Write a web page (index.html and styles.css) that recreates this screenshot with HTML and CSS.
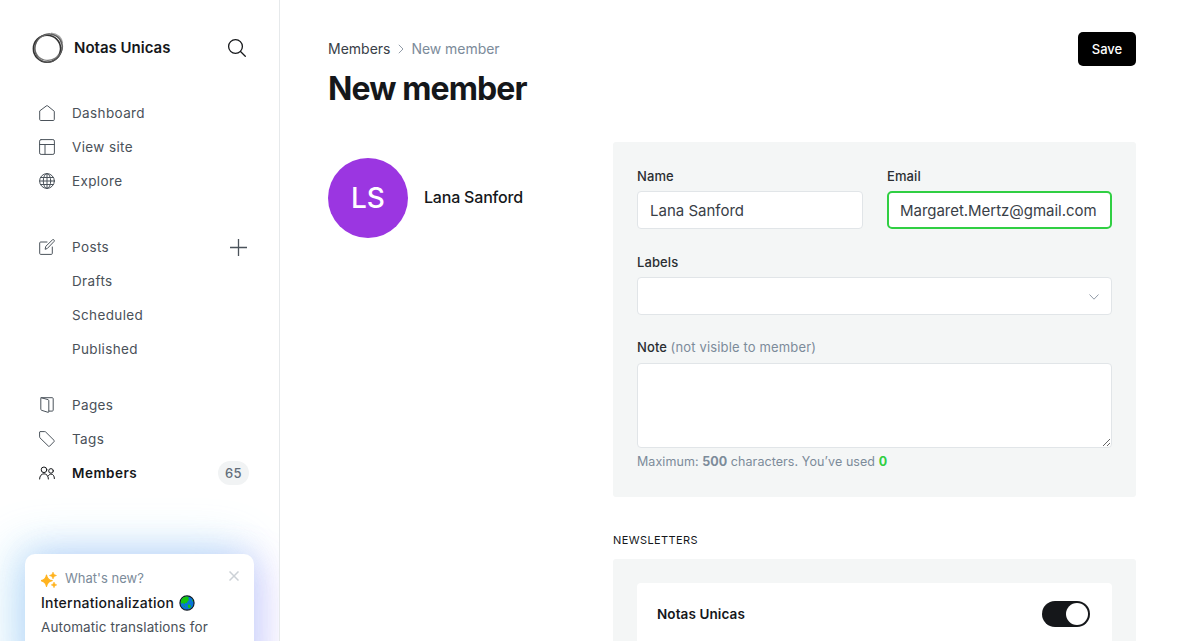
FILE: index.html
```html
<!DOCTYPE html>
<html lang="en">
<head>
<meta charset="utf-8">
<title>New member - Notas Unicas</title>
<link rel="stylesheet" href="styles.css">
</head>
<body>
<div class="app">
  <aside class="sidebar">
    <header class="brand">
      <svg class="brand-logo" viewBox="0 0 32 32" fill="none">
        <path d="M19 1.800C25 2.500 29 6 30 11M29.600 15C29.300 21.500 25.500 26 20.500 28.600" stroke="#aaa" stroke-width="2.400"/>
        <ellipse cx="15" cy="16.700" rx="13.600" ry="13.500" stroke="#333" stroke-width="1.600"/>
        <ellipse cx="16.800" cy="15.300" rx="14" ry="12.800" transform="rotate(-28 16.8 15.3)" stroke="#777" stroke-width="1.1"/>
        <ellipse cx="16.400" cy="16" rx="13.500" ry="14.300" transform="rotate(28 16.4 16)" stroke="#555" stroke-width="1"/>
      </svg>
      <span class="brand-name">Notas Unicas</span>
      <svg class="search" viewBox="0 0 20 20" fill="none" stroke="#15171a" stroke-width="1.3" stroke-linecap="round"><circle cx="8.500" cy="8.500" r="6.900"/><path d="M13.500 13.500l4.800 4.800"/></svg>
    </header>
    <nav class="nav">
      <ul class="nav-group">
        <li><svg viewBox="0 0 16 16"><path d="M.7 6.300v8.200c0 .6.400 1 1 1h12.600c.6 0 1-.4 1-1V6.300L8.700.9a1 1 0 0 0-1.400 0z"/></svg><span>Dashboard</span></li>
        <li><svg viewBox="0 0 16 16"><rect x=".6" y=".6" width="14.800" height="14.800" rx="1.500"/><path d="M.6 5.500h14.800M6 5.500v9.900"/></svg><span>View site</span></li>
        <li><svg viewBox="0 0 16 16"><circle cx="8" cy="8" r="7.400"/><ellipse cx="8" cy="8" rx="3.700" ry="7.400"/><path d="M8 .6v14.800M.6 8h14.800M1.600 4.500h12.800M1.600 11.500h12.800"/></svg><span>Explore</span></li>
      </ul>
      <ul class="nav-group posts">
        <li><svg viewBox="0 0 16 16"><path d="M8 3H1.700a1 1 0 0 0-1 1v10.400a1 1 0 0 0 1 1h10.600a1 1 0 0 0 1-1V8M6.200 9.900l.6-2.600L13.500.8c.5-.4 1.100-.3 1.500.1s.5 1 .1 1.500L8.600 9.200z"/></svg><span>Posts</span><svg class="plus" viewBox="0 0 17 17"><path d="M8.500 0v17M0 8.500h17"/></svg></li>
        <li class="sub">Drafts</li>
        <li class="sub">Scheduled</li>
        <li class="sub">Published</li>
      </ul>
      <ul class="nav-group">
        <li><svg viewBox="0 0 16 16"><path d="M2.100.7 9 2.600c.5.200.8.500.8 1v11.100c0 .5-.4.800-.8.600L2.600 13.300c-.5-.2-.8-.5-.8-1V1.200c0-.3.200-.5.500-.5h11c.5 0 .9.400.9.900v11.600c0 .5-.4.900-.9.900H9.800"/></svg><span>Pages</span></li>
        <li><svg viewBox="0 0 16 16"><path d="M.6 1.400v4.500c0 .4.100.7.400 1l8.500 8.300c.3.300.8.300 1.100 0l4.500-4.700c.3-.3.300-.8 0-1.100L6.700 1C6.400.7 6.100.6 5.800.6H1.300z"/></svg><span>Tags</span></li>
        <li class="active"><svg viewBox="0 0 16 16"><circle cx="5" cy="4.800" r="2.800"/><circle cx="12" cy="5.900" r="2.300"/><path d="M.6 14c0-3.100 1.900-5.200 4.400-5.200S9.400 10.900 9.400 14M9.500 10.600c.6-1 1.500-1.500 2.500-1.500 2 0 3.400 1.700 3.400 4.500"/></svg><span>Members</span><b class="count">65</b></li>
      </ul>
    </nav>
    <section class="whats-new">
      <div class="wn-head">
        <svg class="sparkle" viewBox="0 0 16 16" fill="#ffb31f"><path d="M5.500 3Q6.300 8 11.200 8.700 6.300 9.500 5.500 14.500 4.700 9.500-.2 8.700 4.700 8 5.500 3z" stroke="#ffb31f" stroke-width="1.200" stroke-linejoin="round"/><path d="M12 0l1.100 2.400 2.500 1.100-2.500 1.100L12 7l-1.100-2.400-2.500-1.100 2.500-1.100zM13 10l.9 2 1.900.9-1.900.9-.9 2-.9-2-1.900-.9 1.900-.9z" stroke="#ffb31f" stroke-width=".5"/></svg>
        <span>What's new?</span>
        <svg class="close" viewBox="0 0 10 10"><path d="M.5.500l9 9M9.500.500l-9 9"/></svg>
      </div>
      <h2><span>Internationalization</span>
        <svg class="globe" viewBox="0 0 16 16"><circle cx="8" cy="8" r="7.100" fill="#0875d8" stroke="#101820" stroke-width="1.100"/><path d="M2 5.500C3 3 5 1.700 8 1.600l2 .8-.8 1.400L10 5 8.500 6.500 7.700 8.300 6.500 7.500 5.400 9.200 4 8 2 8.700zM8.800 9.500l2.500.4.7 1.500-1.500 2-1.500-1zM4.500 10.300l1.800 1.300-.7.600zM13 4l1.200 2-1 .5z" fill="#16c60c"/></svg>
      </h2>
      <p>Automatic translations for Ghost members and visitors</p>
    </section>
  </aside>
  <main class="main">
    <header class="page-head">
      <div>
        <div class="crumbs"><span>Members</span><svg viewBox="0 0 6 10"><path d="M.8.800 5 5 .8 9.200"/></svg><span class="current">New member</span></div>
        <h1>New member</h1>
      </div>
      <button class="save">Save</button>
    </header>
    <div class="columns">
      <div class="profile"><div class="avatar">LS</div><h3>Lana Sanford</h3></div>
      <div class="forms">
        <form class="panel">
          <div class="row">
            <div class="field"><label>Name</label><div class="input">Lana Sanford</div></div>
            <div class="field"><label>Email</label><div class="input focused">Margaret.Mertz@gmail.com</div></div>
          </div>
          <div class="field labels"><label>Labels</label><div class="input select"><svg viewBox="0 0 10 6"><path d="M.5.500 5 5.200 9.500.5"/></svg></div></div>
          <div class="field note-field"><label>Note <span>(not visible to member)</span></label><textarea class="note"></textarea>
            <p class="hint">Maximum: <b>500</b> characters. You’ve used <b class="used">0</b></p></div>
        </form>
        <h4>Newsletters</h4>
        <div class="panel newsletters"><div class="newsletter"><span>Notas Unicas</span><span class="toggle"><i></i></span></div></div>
      </div>
    </div>
  </main>
</div>
</body>
</html>
```
FILE: styles.css
```css
* { box-sizing: border-box; }
body { margin: 0; font-family: Inter, "Liberation Sans", sans-serif; color: #15171a; background: #fff; }
ul, h1, h2, h3, h4, p { margin: 0; padding: 0; list-style: none; }
svg { display: block; flex: none; }
.app { display: flex; height: 641px; overflow: hidden; }

.sidebar { width: 280px; flex: none; border-right: 1px solid #e6e9eb; display: flex; flex-direction: column; overflow: hidden; }
.brand { display: flex; flex: none; align-items: center; height: 96px; padding: 0 32px; }
.brand-logo { width: 32px; height: 32px; }
.brand-name { font-size: 15px; font-weight: 600; margin-left: 10px; padding-bottom: 2px; flex: 1; }
.search { width: 20px; height: 20px; }
.nav { flex: none; height: 458px; }
.nav-group { margin-bottom: 32px; }
.nav-group.posts { margin-bottom: 22px; }
.nav-group li { display: flex; align-items: center; height: 34px; padding: 0 30px 0 39px; font-size: 13.5px; letter-spacing: .37px; color: #4a5159; font-weight: 400; }
.nav-group li svg { width: 16px; height: 16px; fill: none; stroke: #4b535b; stroke-width: 1; stroke-linejoin: round; stroke-linecap: round; }
.nav-group li span { margin-left: 17px; flex: 1; }
.nav-group li.sub { padding-left: 72px; }
.nav-group li .plus { width: 17px; height: 17px; margin-right: 2px; stroke-width: 1.300; }
.nav-group li.active { color: #15171a; font-weight: 600; letter-spacing: .5px; }
.nav-group li.active svg { stroke: #15171a; }
.count { width: 31px; height: 24px; border-radius: 12px; background: #f1f3f4; color: #626d79; font-size: 13px; font-weight: 500; line-height: 24px; text-align: center; }

.whats-new { flex: none; height: 130px; margin: 0 25px; padding: 16px; border-radius: 10px; background: #fff; box-shadow: -12px -4px 50px rgba(100, 200, 240, .32), 12px 8px 40px rgba(180, 100, 255, .2), 0 -2px 32px rgba(110, 165, 240, .24); }
.wn-head { display: flex; align-items: center; height: 17px; font-size: 13px; color: #7c8b9a; }
.sparkle { width: 16px; height: 16px; margin-top: 2px; }
.wn-head span { flex: 1; margin: -1px 0 0 8px; white-space: nowrap; }
.close { width: 10px; height: 10px; margin: -5px -1px 0 0; stroke: #ccd1d6; stroke-width: 1.500; }
.whats-new h2 { display: flex; align-items: center; gap: 5px; height: 20px; margin-top: 6px; font-size: 14px; font-weight: 500; letter-spacing: .25px; white-space: nowrap; }
.whats-new h2 span { padding-bottom: 2px; }
.globe { width: 16px; height: 16px; }
.whats-new p { margin-top: 5px; font-size: 13.5px; letter-spacing: .12px; line-height: 19.5px; color: #4a5159; }

.main { flex: 1; padding: 32px 48px; overflow: hidden; }
.page-head { display: flex; justify-content: space-between; align-items: flex-start; height: 110px; }
.crumbs { display: flex; align-items: center; height: 34px; font-size: 14px; line-height: 16px; padding-bottom: 1px; color: #394047; }
.crumbs svg { width: 6px; height: 10px; margin: 1px 7px 0 8px; fill: none; stroke: #929ca8; }
.crumbs .current { color: #7c8b9a; letter-spacing: -.05px; }
h1 { font-size: 32px; line-height: 40px; margin-top: 3px; font-weight: 700; letter-spacing: -.9px; }
.save { width: 58px; height: 34px; border: 0; border-radius: 5px; background: #000; color: #fff; font: 500 13px Inter, sans-serif; padding: 0; }
.columns { display: flex; justify-content: space-between; }
.profile { display: flex; align-items: center; height: 112px; gap: 16px; }
.avatar { width: 80px; height: 80px; border-radius: 50%; background: #9b36e1; color: #fff; font-size: 28px; font-weight: 500; line-height: 80px; text-align: center; }
h3 { font-size: 16px; font-weight: 500; letter-spacing: -.2px; padding-bottom: 2px; }
.forms { width: 523px; }
.panel { background: #f4f6f6; border-radius: 3px; padding: 24px; height: 355px; }
.row { display: grid; grid-template-columns: 226px 225px; gap: 24px; }
.field label { display: block; height: 25px; line-height: 21px; font-size: 13px; font-weight: 500; letter-spacing: .1px; color: #2a2e32; }
.field label span { color: #7c8b9a; font-weight: 400; letter-spacing: .15px; }
.input { height: 38px; padding: 0 12px; line-height: 37px; border: 1px solid #e1e5e8; border-radius: 4px; background: #fff; color: #394047; font-size: 15px; }
.input.focused { padding: 0 11px; line-height: 35px; border: 2px solid #30cf43; border-radius: 5px; letter-spacing: -.03px; }
.labels { margin: 23px 0; }
.note-field label { line-height: 19px; }
.select { display: flex; align-items: center; justify-content: flex-end; }
.select svg { width: 10px; height: 6px; margin-top: 1px; fill: none; stroke: #929ca8; }
.note { display: block; width: 475px; height: 85px; border: 1px solid #e1e5e8; border-radius: 4px; background: #fff; }
.hint { margin-top: 4px; font-size: 12.5px; letter-spacing: .07px; line-height: 20px; color: #7c8b9a; }
.hint b { font-weight: 700; }
.hint .used { color: #30cf43; }
h4 { margin-top: 34px; height: 28px; font-size: 11px; line-height: 18px; font-weight: 400; letter-spacing: .4px; text-transform: uppercase; }
.newsletter { display: flex; align-items: center; justify-content: space-between; height: 62px; padding: 0 22px 0 20px; border-radius: 4px; background: #fff; font-size: 13.5px; font-weight: 600; letter-spacing: .1px; }
.toggle { width: 48px; height: 26px; border-radius: 13px; background: #15171a; padding: 2px; display: flex; justify-content: flex-end; }
.toggle i { width: 22px; height: 22px; border-radius: 50%; background: #fff; }
```
